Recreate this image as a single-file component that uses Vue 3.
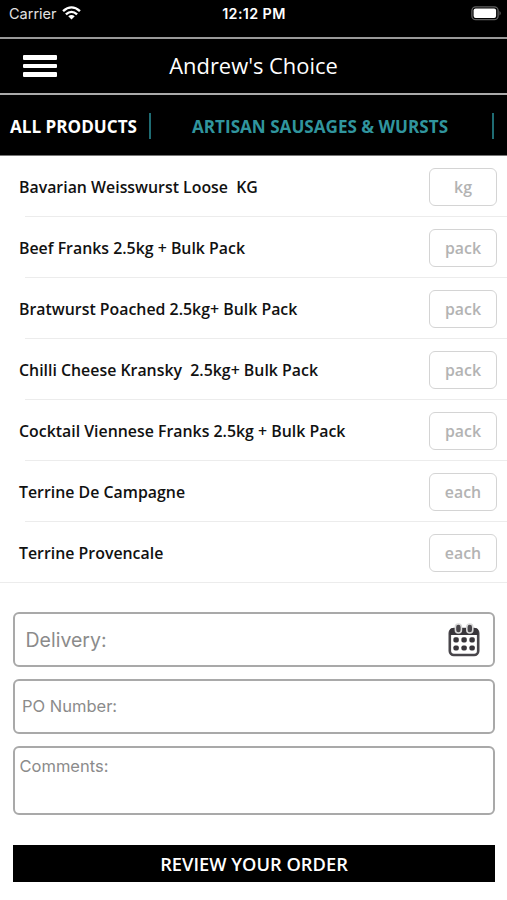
<script setup>
const products = [
  { name: 'Bavarian Weisswurst Loose  KG', unit: 'kg' },
  { name: 'Beef Franks 2.5kg + Bulk Pack', unit: 'pack' },
  { name: 'Bratwurst Poached 2.5kg+ Bulk Pack', unit: 'pack' },
  { name: 'Chilli Cheese Kransky  2.5kg+ Bulk Pack', unit: 'pack' },
  { name: 'Cocktail Viennese Franks 2.5kg + Bulk Pack', unit: 'pack' },
  { name: 'Terrine De Campagne', unit: 'each' },
  { name: 'Terrine Provencale', unit: 'each' },
]
</script>

<template>
  <div class="screen">
    <div class="status">
      <div class="carrier">
        <span>Carrier</span>
        <svg class="wifi" width="19" height="14" viewBox="0 0 18 14" preserveAspectRatio="none">
          <path d="M1 5.1Q9-2.3 17 5.1M3.7 8.300Q9 3.400 14.3 8.300" fill="none" stroke="#fff" stroke-width="2.3" />
          <path d="M5.9 10.300Q9 7.600 12.1 10.300L9 13.6Z" fill="#fff" />
        </svg>
      </div>
      <span class="time">12:12 PM</span>
      <svg class="battery" width="31" height="15" viewBox="0 0 31 15">
        <rect x=".9" y=".9" width="26.2" height="12.8" rx="3.8" fill="none" stroke="#606060" stroke-width="1.3" />
        <rect x="2.6" y="2.5" width="22.5" height="9.6" rx="2" fill="#fff" />
        <path d="M28.5 5Q31 7.2 28.5 9.6Z" fill="#606060" />
      </svg>
    </div>
    <header class="header">
      <div class="burger"><i></i><i></i><i></i></div>
      <h1>Andrew's Choice</h1>
    </header>
    <nav class="tabs">
      <span class="tab all">ALL PRODUCTS</span>
      <span class="tab artisan">ARTISAN SAUSAGES &amp; WURSTS</span>
    </nav>
    <ul class="list">
      <li v-for="p in products" :key="p.name">
        <span class="name">{{ p.name }}</span>
        <span class="unit">{{ p.unit }}</span>
      </li>
    </ul>
    <div class="form">
      <div class="field delivery">
        <span>Delivery:</span>
        <svg width="32" height="34" viewBox="0 0 32 34">
          <rect x="1.8" y="6" width="28.4" height="26" rx="4" fill="#fff" stroke="#49464b" stroke-width="2.6" />
          <path d="M1.8 12V8Q1.8 5 5 5H27Q30.200 5 30.200 8V12Z" fill="#38353a" />
          <g fill="#48454a" stroke="#d8d8d8" stroke-width="1.6">
            <rect x="7.400" y="1" width="6" height="9" rx="3" />
            <rect x="18.800" y="1" width="6" height="9" rx="3" />
          </g>
          <g fill="#38353a">
            <rect x="5.400" y="14.300" width="5.400" height="5.200" rx="1.800" />
            <rect x="13.400" y="14.300" width="5.400" height="5.200" rx="1.800" />
            <rect x="21.400" y="14.300" width="5.400" height="5.200" rx="1.800" />
            <rect x="5.400" y="22.400" width="5.400" height="5.200" rx="1.800" />
            <rect x="13.400" y="22.400" width="5.400" height="5.200" rx="1.800" />
            <rect x="21.400" y="22.400" width="5.400" height="5.200" rx="1.800" />
          </g>
        </svg>
      </div>
      <div class="field po">PO Number:</div>
      <div class="field comments">Comments:</div>
      <button class="review">REVIEW YOUR ORDER</button>
    </div>
  </div>
</template>

<style>
body { margin: 0; background: #fff; }
</style>

<style scoped>
* { box-sizing: border-box; }
.screen { width: 507px; height: 900px; overflow: hidden; background: #fff; font-family: "Open Sans", sans-serif; }
.status {
  height: 37px; padding: 0 5px 9px 9px; background: #000; color: #fff;
  display: grid; grid-template-columns: 1fr auto 1fr; align-items: center;
  font: 14.5px/20px Inter, sans-serif;
}
.carrier { display: flex; align-items: center; gap: 5px; color: #e2e2e2; }
.wifi { margin-top: -3px; }
.time { font-weight: 600; font-size: 14.300px; letter-spacing: .4px; margin-right: 3px; }
.battery { justify-self: end; margin-top: -2px; }
.header {
  height: 58px; background: #000; color: #fff;
  border-top: 2px solid #999; border-bottom: 2px solid #aaa;
  display: grid; grid-template-columns: 34px 1fr 34px; align-items: center; padding: 0 23px;
}
.burger { display: flex; flex-direction: column; gap: 4px; }
.burger i { height: 4.600px; background: #fff; border-radius: 1px; }
h1 { margin: 0; text-align: center; font-size: 21.900px; line-height: 30px; font-weight: 400; }
.tabs { height: 61px; padding-top: 1px; background: #000; display: flex; align-items: center; border-bottom: 1px solid #777; }
.tab { height: 26px; line-height: 27px; font-size: 17.100px; font-weight: 700; white-space: nowrap; border-right: 2px solid #1f6c73; }
.all { width: 151px; padding-left: 10px; color: #fff; }
.artisan { width: 343px; padding-left: 41px; color: #30959e; }
.list { margin: 0; padding: 0; list-style: none; }
.list li {
  height: 61px; display: flex; align-items: center; justify-content: space-between; padding: 0 10px 0 19px;
  background: linear-gradient(#ececec, #ececec) 25px 100% / 100% 1.500px no-repeat;
}
.list li:last-child { background-position: 0 100%; }
.name { white-space: pre; font-size: 15.880px; font-weight: 600; color: #111; line-height: 22px; }
.unit {
  width: 68px; height: 38px; border: 1.500px solid #d4d4d4; border-radius: 6px; color: #b3b3b3;
  font-size: 15.880px; line-height: 37px; font-weight: 600; text-align: center;
}
.form { padding: 29px 12px 0 13px; display: flex; flex-direction: column; }
.field { border: 2px solid #a9a9a9; border-radius: 6px; color: #8b8b8b; font-family: Inter, sans-serif; font-size: 16.500px; }
.delivery { height: 55px; margin-bottom: 12px; padding: 0 13px 0 10.500px; display: flex; align-items: center; justify-content: space-between; font-size: 19.500px; }
.po { height: 55px; margin-bottom: 12px; padding-left: 7px; line-height: 51px; }
.comments { height: 69px; margin-bottom: 30px; padding: 7px 0 0 4.500px; line-height: 22px; }
.review { height: 37px; padding: 0; border: 0; background: #000; color: #fff; font: 600 18.300px/37px "Open Sans", sans-serif; }
</style>
